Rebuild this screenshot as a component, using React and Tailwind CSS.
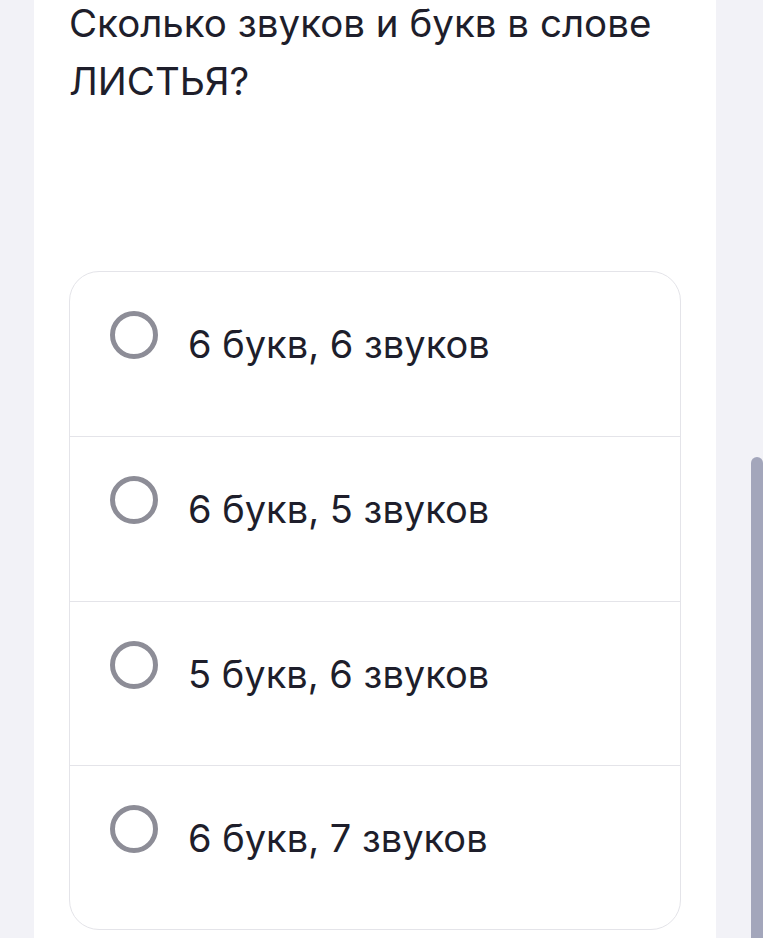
export default function App() {
  const options = ["6 букв, 6 звуков", "6 букв, 5 звуков", "5 букв, 6 звуков", "6 букв, 7 звуков"];
  const heights = ["h-[164px]", "h-[165px]", "h-[164px]", "h-[164px]"];
  return (
    <div className="relative w-[763px] h-[938px] overflow-hidden bg-[#f2f2f7]" style={{ fontFamily: "Inter, 'Noto Sans', sans-serif" }}>
      <div className="ml-[34px] w-[682px] h-full flex flex-col bg-white px-[35px]">
        <h1 className="-mt-[6px] text-[38.5px] leading-[58px] font-[430] text-[#1e1e2b]">
          Сколько звуков и букв в слове
          <br />
          ЛИСТЬЯ?
        </h1>
        <div className="mt-[161px] w-[612px] shrink-0 rounded-[30px] border border-[#e4e4e9] bg-white overflow-hidden">
          {options.map((o, i) => (
            <div
              key={i}
              className={`flex items-start ${heights[i]} pt-[39px] pl-[40px] ${i > 0 ? "border-t border-[#e4e4e9]" : ""}`}
            >
              <div className="w-[48px] h-[48px] shrink-0 rounded-full border-[5px] border-[#8d8d97]" />
              <div className="ml-[30px] mt-[4px] text-[38px] leading-[58px] font-[430] text-[#1e1e2b]">{o}</div>
            </div>
          ))}
        </div>
      </div>
      <div className="absolute left-[751px] top-[457px] w-[12px] h-[520px] rounded-full bg-[#a3a6bb]" />
    </div>
  );
}
